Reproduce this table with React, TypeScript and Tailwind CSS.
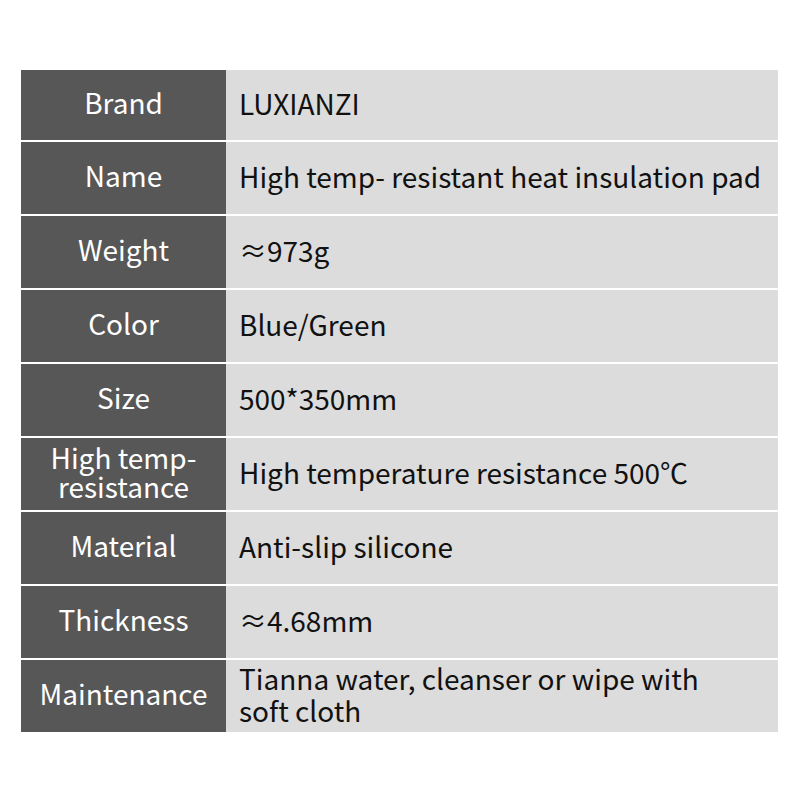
const ROWS: { label: string[]; value: string[] }[] = [
  { label: ['Brand'], value: ['LUXIANZI'] },
  { label: ['Name'], value: ['High temp- resistant heat insulation pad'] },
  { label: ['Weight'], value: ['≈973g'] },
  { label: ['Color'], value: ['Blue/Green'] },
  { label: ['Size'], value: ['500*350mm'] },
  { label: ['High temp-', 'resistance'], value: ['High temperature resistance 500℃'] },
  { label: ['Material'], value: ['Anti-slip silicone'] },
  { label: ['Thickness'], value: ['≈4.68mm'] },
  { label: ['Maintenance'], value: ['Tianna water, cleanser or wipe with', 'soft cloth'] },
];

export default function App() {
  return (
    <div
      className="w-[800px] h-[800px] bg-white pt-[70px] pl-[21px]"
      style={{ fontFamily: '"Noto Sans CJK SC", "Noto Sans", sans-serif' }}
    >
      <div className="w-[757px] flex flex-col gap-[2px]">
        {ROWS.map((row, i) => (
          <div key={i} className={`flex ${i === 0 ? 'h-[70px]' : 'h-[72px]'}`}>
            <div className="w-[205px] bg-[#575757] text-white flex flex-col items-center justify-center pb-[5px] text-[28px] leading-[29px]">
              {row.label.map((l) => (
                <span key={l}>{l}</span>
              ))}
            </div>
            <div className="flex-1 bg-[#dcdcdc] text-[#111] flex flex-col justify-center pl-[13px] pb-[5px] text-[28px] leading-[32px]">
              {row.value.map((v) => (
                <span key={v}>{v}</span>
              ))}
            </div>
          </div>
        ))}
      </div>
    </div>
  );
}
